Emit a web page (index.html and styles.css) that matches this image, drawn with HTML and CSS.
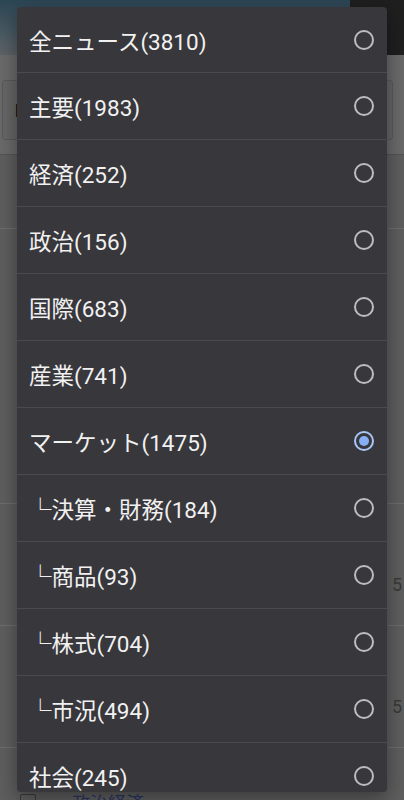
FILE: index.html
```html
<!DOCTYPE html>
<html lang="ja">
<head>
  <meta charset="UTF-8" />
  <meta name="viewport" content="width=device-width, initial-scale=1.0"/>
  <title>カテゴリ選択</title>
  <link rel="stylesheet" href="styles.css">
</head>
<body>
  <div class="page">
    <header class="topbar">
      <div class="brand"></div>
      <div class="tools"></div>
    </header>
    <div class="searchwrap">
      <div class="search"><span class="search-text">F</span></div>
    </div>
    <ul class="feed">
      <li class="feed-item tall"></li>
      <li class="feed-item xtall"></li>
      <li class="feed-item mid"><span class="count">5</span></li>
      <li class="feed-item mid"><span class="count">5</span></li>
      <li class="feed-item last">
        <span class="check"></span>
        <span class="feed-title">政治経済</span>
      </li>
    </ul>
  </div>

  <div class="dialog">
    <ul class="options">
      <li class="option"><span class="label">全ニュース(3810)</span><span class="radio"></span></li>
      <li class="option"><span class="label">主要(1983)</span><span class="radio"></span></li>
      <li class="option"><span class="label">経済(252)</span><span class="radio"></span></li>
      <li class="option"><span class="label">政治(156)</span><span class="radio"></span></li>
      <li class="option"><span class="label">国際(683)</span><span class="radio"></span></li>
      <li class="option"><span class="label">産業(741)</span><span class="radio"></span></li>
      <li class="option"><span class="label">マーケット(1475)</span><span class="radio checked"></span></li>
      <li class="option"><span class="label"><span class="branch">└</span>決算・財務(184)</span><span class="radio"></span></li>
      <li class="option"><span class="label"><span class="branch">└</span>商品(93)</span><span class="radio"></span></li>
      <li class="option"><span class="label"><span class="branch">└</span>株式(704)</span><span class="radio"></span></li>
      <li class="option"><span class="label"><span class="branch">└</span>市況(494)</span><span class="radio"></span></li>
      <li class="option"><span class="label">社会(245)</span><span class="radio"></span></li>
    </ul>
  </div>
</body>
</html>
```

FILE: styles.css
```css
* {
  box-sizing: border-box;
}

body {
  margin: 0;
  padding: 0;
  width: 404px;
  height: 800px;
  overflow: hidden;
  background: #5e5e5e;
  font-family: Roboto, "Noto Sans CJK JP", sans-serif;
}

/* dimmed page behind the dialog */
.page {
  height: 800px;
  display: flex;
  flex-direction: column;
}

.topbar {
  height: 55px;
  flex-shrink: 0;
  display: flex;
}

.brand {
  flex: 1;
  background: linear-gradient(to bottom, #2c4656, #4f5d64 70%, #5c6266);
}

.tools {
  width: 54px;
  background: #1f1f1f;
}

.searchwrap {
  flex-shrink: 0;
  background: #6a6a6a;
  padding: 25px 11px 14px 2px;
  border-bottom: 1px solid #545454;
}

.search {
  height: 60px;
  border: 1px solid #5a5a5a;
  border-radius: 3px;
  background: #666;
  display: flex;
  align-items: center;
  padding-left: 12px;
}

.search-text {
  font-size: 18px;
  font-weight: bold;
  color: #111;
}

.feed {
  list-style: none;
  margin: 0;
  padding: 0;
  flex: 1;
  min-height: 0;
  overflow: hidden;
}

.feed-item {
  border-bottom: 1px solid #6e6e6e;
  position: relative;
}

.feed-item.tall { height: 74px; }
.feed-item.xtall { height: 275px; }
.feed-item.mid { height: 122px; }
.feed-item.last { height: 80px; }

.count {
  position: absolute;
  right: 2px;
  bottom: 31px;
  font-size: 18px;
  line-height: 1;
  color: #3a3a3a;
}

.check {
  position: absolute;
  left: 20px;
  top: 46px;
  width: 16px;
  height: 16px;
  border: 1px solid #3a3a3a;
  border-radius: 2px;
}

.feed-title {
  position: absolute;
  left: 72px;
  top: 47px;
  font-size: 18px;
  line-height: 1;
  color: #2a3560;
}

/* dialog */
.dialog {
  position: absolute;
  top: 7px;
  left: 17px;
  width: 370px;
  height: 785px;
  background: #38373c;
  border-radius: 4px;
  overflow: hidden;
  box-shadow: 0 6px 20px rgba(0, 0, 0, 0.4);
}

.options {
  list-style: none;
  margin: 0;
  padding: 0;
}

.option {
  height: 67px;
  display: flex;
  align-items: center;
  justify-content: space-between;
  padding: 0 13px 0 12px;
  border-bottom: 1px solid #4b4a4f;
}

.option:first-child {
  height: 66px;
}

.label {
  font-size: 22.5px;
  color: #f1f1f1;
  white-space: nowrap;
}

.branch {
  font-family: "Noto Sans CJK JP", sans-serif;
}

.radio {
  width: 20px;
  height: 20px;
  border: 2px solid #bdbdbd;
  border-radius: 50%;
  display: flex;
  align-items: center;
  justify-content: center;
  flex-shrink: 0;
}

.radio.checked {
  border-color: #a9c5f5;
}

.radio.checked::after {
  content: "";
  width: 10px;
  height: 10px;
  border-radius: 50%;
  background: #86aef5;
}
```
